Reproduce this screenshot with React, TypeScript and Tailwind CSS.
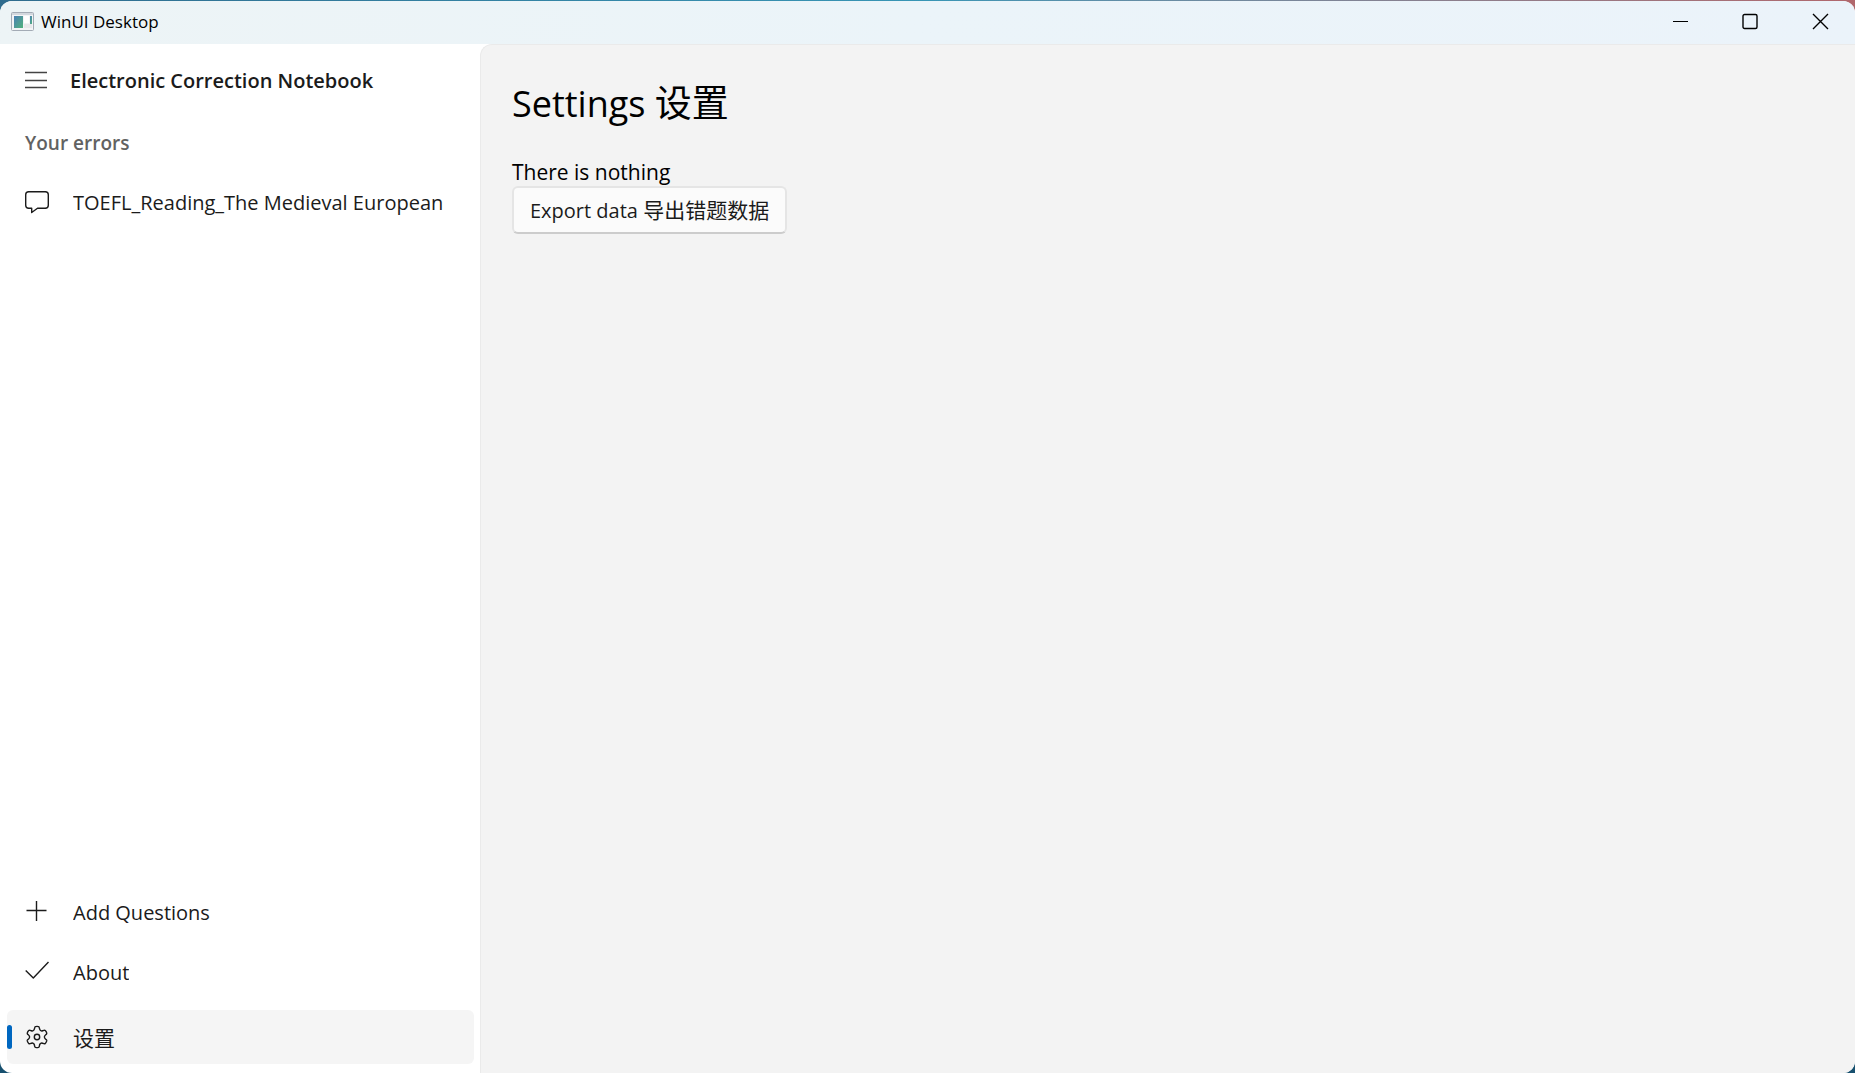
import type { ReactNode } from "react";

function Icon({ children, size = 24 }: { children: ReactNode; size?: number }) {
  return (
    <svg
      width={size}
      height={size}
      viewBox={`0 0 ${size} ${size}`}
      fill="none"
      stroke="currentColor"
      strokeWidth="1.4"
      strokeLinejoin="round"
      className="shrink-0"
      aria-hidden="true"
    >
      {children}
    </svg>
  );
}

function AppIcon() {
  return (
    <svg width="23" height="19" viewBox="0 0 23 19" aria-hidden="true" className="shrink-0">
      <defs>
        <linearGradient id="pane" x1="0" y1="0" x2="1" y2="1">
          <stop offset="0" stopColor="#4a80b5" />
          <stop offset="1" stopColor="#52b27c" />
        </linearGradient>
      </defs>
      <rect x="0.5" y="0.5" width="22" height="18" rx="1" fill="#f3f4f6" stroke="#a3abb5" />
      <rect x="1" y="1" width="21" height="2" fill="#d3d8de" />
      <rect x="3" y="4" width="9" height="12" fill="url(#pane)" />
      <rect x="13" y="4" width="5" height="7" fill="#ffffff" />
      <rect x="13" y="12" width="8" height="4" fill="#e8e8ea" />
      <rect x="19" y="4" width="2" height="8" fill="url(#pane)" />
    </svg>
  );
}

function gearPath() {
  const points: string[] = [];
  for (let i = 0; i < 6; i++) {
    const at = (deg: number, r: number) => {
      const a = ((i * 60 + deg - 90) * Math.PI) / 180;
      return `${(12 + r * Math.cos(a)).toFixed(2)} ${(12 + r * Math.sin(a)).toFixed(2)}`;
    };
    points.push(
      `${i === 0 ? "M" : "L"}${at(-14, 9.6)} Q${at(-12, 10.4)} ${at(-8, 10.5)} Q${at(0, 10.8)} ${at(8, 10.5)} Q${at(12, 10.4)} ${at(14, 9.6)} L${at(18, 8.4)} Q${at(22, 7.3)} ${at(30, 7.5)} Q${at(38, 7.3)} ${at(42, 8.4)}`
    );
  }
  return points.join(" ") + " Z";
}

function NavItem({ icon, label, selected = false }: { icon: ReactNode; label: ReactNode; selected?: boolean }) {
  return (
    <button
      type="button"
      aria-current={selected ? "page" : undefined}
      className={
        selected
          ? "flex h-[54px] w-full items-center rounded-md bg-[#f5f5f5] text-left"
          : "flex h-[54px] w-full items-center rounded-md text-left"
      }
    >
      <span className={selected ? "h-6 w-[5px] rounded-full bg-[#0067c0]" : "h-6 w-[5px]"} />
      <span className="ml-[13px] flex w-12 shrink-0">{icon}</span>
      <span className="truncate pt-0.5">{label}</span>
    </button>
  );
}

export default function App() {
  return (
    <div className="flex h-screen flex-col bg-[#17506f] bg-linear-to-r from-[#2f6c8e] via-[#3795b5] to-[#b0676c] bg-[length:100%_24px] bg-no-repeat pt-px font-['Open_Sans','Noto_Sans_CJK_SC',sans-serif] text-[20px] leading-7 text-[#1b1b1b]">
      <div className="flex min-h-0 flex-1 flex-col overflow-hidden rounded-xl bg-white">
        <header className="flex h-[43px] shrink-0 items-center justify-between bg-linear-to-r from-[#edf4f6] via-[#ebf4f9] to-[#ebf3fa] pb-0.5 text-black">
          <div className="flex items-center gap-[7px] pl-[11px]">
            <AppIcon />
            <span className="text-[17px]">WinUI Desktop</span>
          </div>
          <div className="flex h-full">
            <button type="button" aria-label="Minimize" className="flex w-[70px] items-center justify-center">
              <Icon size={17}>
                <path d="M1 8.5H16" strokeWidth="1" />
              </Icon>
            </button>
            <button type="button" aria-label="Maximize" className="flex w-[70px] items-center justify-center">
              <Icon size={17}>
                <rect x="1" y="1.5" width="14" height="14" rx="1.5" strokeWidth="1.4" />
              </Icon>
            </button>
            <button type="button" aria-label="Close" className="flex w-[70px] items-center justify-center">
              <Icon size={17}>
                <path d="M1 1L16 16M16 1L1 16" strokeWidth="1.4" />
              </Icon>
            </button>
          </div>
        </header>

        <div className="flex min-h-0 flex-1">
          <nav className="flex w-[480px] shrink-0 flex-col pr-[6px] pb-[9px] pl-[7px]">
            <div className="flex h-[72px] items-center">
              <button type="button" aria-label="Toggle navigation" className="ml-[17px] flex w-[46px] text-[#444]">
                <Icon>
                  <path d="M1 4.5H23M1 12.5H23M1 19.5H23" />
                </Icon>
              </button>
              <h1 className="pt-0.5 font-semibold">Electronic Correction Notebook</h1>
            </div>
            <h2 className="flex h-[54px] items-center pl-[18px] text-[19px] font-semibold text-[#626262]">Your errors</h2>
            <div className="pt-[5px]">
              <NavItem
                label="TOEFL_Reading_The Medieval European"
                icon={
                  <Icon>
                    <path d="M3.7 1.7H20.3Q23.3 1.7 23.3 4.7V15.3Q23.3 18.3 20.3 18.3H12.5L6.7 22.5V18.3H3.7Q0.7 18.3 0.7 15.3V4.7Q0.7 1.7 3.7 1.7Z" />
                  </Icon>
                }
              />
            </div>
            <div className="mt-auto flex flex-col gap-[6px]">
              <NavItem
                label="Add Questions"
                icon={
                  <Icon>
                    <path d="M11.5 1V21M1.5 10.5H21.5" />
                  </Icon>
                }
              />
              <NavItem
                label="About"
                icon={
                  <Icon>
                    <path d="M0.7 10.5L8.3 18L23.5 2" />
                  </Icon>
                }
              />
              <div className="pt-[5px]">
                <NavItem
                  selected
                  label={<span className="text-[21px]">设置</span>}
                  icon={
                    <Icon>
                      <path d={gearPath()} />
                      <circle cx="12" cy="12" r="2.7" />
                    </Icon>
                  }
                />
              </div>
            </div>
          </nav>

          <main className="min-w-0 flex-1 rounded-tl-xl border-t border-l border-[#eaeaea] bg-[#f3f3f3] px-[31px] pt-[31px] text-black">
            <h2 className="text-[36px] leading-[54px]">
              Settings <span className="text-[37px]">设置</span>
            </h2>
            <p className="pt-[27px] text-[21px]">There is nothing</p>
            <button
              type="button"
              className="h-[48px] rounded-md border-2 border-[#e5e5e5] border-b-[#cccccc] bg-[#fbfbfb] px-4 text-[#1b1b1b]"
            >
              Export data <span className="text-[21px]">导出错题数据</span>
            </button>
          </main>
        </div>
      </div>
    </div>
  );
}
